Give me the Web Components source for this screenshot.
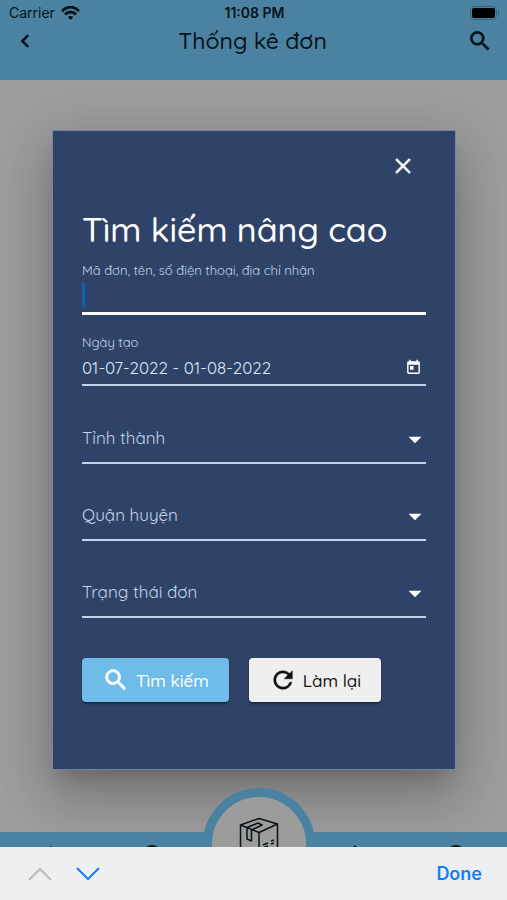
<!DOCTYPE html>
<html lang="vi">
<head>
<meta charset="utf-8">
<meta name="viewport" content="width=device-width, initial-scale=1">
<title>Thống kê đơn</title>
<style>
  body {
    margin: 0;
    min-height: 100vh;
    display: flex;
    flex-direction: column;
    background-color: #9e9e9e;
    font-family: Quicksand, Inter, "Noto Sans", sans-serif;
    color: #07131a;
    --bar: #4b82a1;
    --panel: #2f4368;
    --soft: #c3d3ea;
    --ios: Inter, "Liberation Sans", sans-serif;
  }

  main {
    flex: 1;
    padding: 50px 51px 60px 52px;
  }
</style>
</head>
<body>
<app-header>
  <status-bar slot="status"></status-bar>
  Thống kê đơn
</app-header>
<main>
  <search-dialog>
    <span slot="title">Tìm kiếm nâng cao</span>
    <text-field label="Mã đơn, tên, số điện thoại, địa chỉ nhận" active></text-field>
    <text-field label="Ngày tạo" value="01-07-2022 - 01-08-2022" icon="today"></text-field>
    <select-field label="Tỉnh thành"></select-field>
    <select-field label="Quận huyện"></select-field>
    <select-field label="Trạng thái đơn"></select-field>
    <icon-button slot="actions" icon="search" kind="primary">Tìm kiếm</icon-button>
    <icon-button slot="actions" icon="refresh">Làm lại</icon-button>
  </search-dialog>
</main>
<bottom-nav></bottom-nav>
<keyboard-bar>Done</keyboard-bar>

<script>
"use strict";

const icons = {
  back: `<path d="M15.5 5.5 9 12l6.5 6.5" fill="none" stroke="currentColor" stroke-width="2.8"/>`,
  search: `<path d="M15.5 14h-.79l-.28-.27A6.47 6.47 0 0 0 16 9.5 6.5 6.5 0 1 0 9.5 16c1.61 0 3.09-.59 4.23-1.57l.27.28v.79l5 4.99L20.49 19l-4.99-5zm-6 0C7.01 14 5 11.99 5 9.5S7.01 5 9.5 5 14 7.01 14 9.5 11.99 14 9.5 14z" stroke="currentColor" stroke-width=".5"/>`,
  close: `<path d="M19 6.41 17.59 5 12 10.59 6.41 5 5 6.41 10.59 12 5 17.59 6.41 19 12 13.41 17.59 19 19 17.59 13.41 12z" stroke="currentColor" stroke-width=".4"/>`,
  today: `<path d="M19 3h-1V1h-2v2H8V1H6v2H5c-1.11 0-1.99.9-1.99 2L3 19c0 1.1.89 2 2 2h14c1.1 0 2-.9 2-2V5c0-1.1-.9-2-2-2zm0 16H5V8h14v11zM7 10h5v5H7z"/>`,
  drop: `<path d="m6 9 6 6 6-6z"/>`,
  refresh: `<path d="M17.65 6.35A7.958 7.958 0 0 0 12 4a8 8 0 1 0 7.73 10h-2.08A5.99 5.99 0 0 1 12 18c-3.31 0-6-2.69-6-6s2.69-6 6-6c1.66 0 3.14.69 4.22 1.78L13 11h7V4l-2.35 2.35z" stroke="currentColor" stroke-width=".4"/>`,
  home: `<path d="M12 3 2 12h3v8h5v-6h4v6h5v-8h3z"/>`,
  circle: `<circle cx="12" cy="12" r="10"/>`,
  bell: `<path d="M12 22a2 2 0 0 0 2-2h-4c0 1.1.9 2 2 2zm6-6v-5c0-3-1.6-5.6-4.5-6.3V4a1.5 1.5 0 0 0-3 0v.7C7.6 5.4 6 7.9 6 11v5l-2 2v1h16v-1z"/>`,
};

function svg(name, size) {
  return `<svg width="${size}" height="${size}" viewBox="0 0 24 24" fill="currentColor" aria-hidden="true">${icons[name]}</svg>`;
}

class StatusBar extends HTMLElement {
  connectedCallback() {
    const shadow = this.attachShadow({ mode: "open" });
    shadow.innerHTML = `
<style>
  :host {
    display: grid;
    grid-template-columns: 1fr auto 1fr;
    align-items: center;
    height: 26px;
    padding: 0 7px 0 9px;
    font: 400 14px/20px var(--ios);
  }
  .network {
    display: flex;
    align-items: center;
    gap: 6px;
  }
  time {
    font-weight: 600;
  }
  .battery {
    justify-self: end;
  }
  svg {
    display: block;
  }
</style>
<div class="network">
  <span>Carrier</span>
  <svg width="19" height="14" viewBox="0 0 19 14" fill="none" stroke="currentColor" stroke-width="2.9">
    <path d="M1 5.2C6-.2 13-.2 18 5.2M4 8.5c3.2-3.4 7.8-3.4 11 0"/>
    <path d="M6.7 11 9.5 14l2.800-3c-1.6-1.5-4-1.5-5.6 0z" fill="currentColor" stroke="none"/>
  </svg>
</div>
<time>11:08 PM</time>
<svg class="battery" width="30" height="14" viewBox="0 0 30 14">
  <rect x=".5" y=".5" width="26" height="13" rx="4" fill="none" stroke="#32637f"/>
  <rect x="2" y="2" width="23" height="10" rx="2"/>
  <path d="M28 4.500c2 .8 2 4.2 0 5z" fill="#32637f"/>
</svg>`;
  }
}

class AppHeader extends HTMLElement {
  connectedCallback() {
    const shadow = this.attachShadow({ mode: "open" });
    shadow.innerHTML = `
<style>
  :host {
    display: block;
    box-sizing: border-box;
    padding-bottom: 24px;
    background-color: var(--bar);
  }
  .row {
    display: grid;
    grid-template-columns: 26px 1fr 26px;
    align-items: center;
    padding: 0 14px 0 12px;
  }
  h1 {
    margin: 0;
    font-weight: 500;
    font-size: 23px;
    line-height: 30px;
    text-align: center;
  }
  button {
    display: flex;
    justify-content: center;
    padding: 0;
    border: none;
    background: transparent;
    color: inherit;
  }
</style>
<slot name="status"></slot>
<div class="row">
  <button aria-label="Quay lại">${svg("back", 22)}</button>
  <h1><slot></slot></h1>
  <button aria-label="Tìm kiếm">${svg("search", 30)}</button>
</div>`;
  }
}

class SearchDialog extends HTMLElement {
  connectedCallback() {
    const shadow = this.attachShadow({ mode: "open" });
    shadow.innerHTML = `
<style>
  :host {
    display: block;
    box-sizing: border-box;
    padding: 20px 29px 67px;
    border: 1px solid #7287a3;
    background-color: var(--panel);
    color: #fff;
    box-shadow: 0 14px 19px -9px rgba(0, 0, 0, .2), 0 30px 48px 4px rgba(0, 0, 0, .14), 0 11px 58px 10px rgba(0, 0, 0, .12);
  }
  .close {
    display: block;
    margin: 0 8px 0 auto;
    padding: 2px;
    border: none;
    background: transparent;
    color: inherit;
    line-height: 0;
  }
  h2 {
    margin: 25px 0 8px;
    font-weight: 500;
    font-size: 34px;
    line-height: 48px;
    white-space: nowrap;
  }
  .actions {
    display: flex;
    gap: 20px;
    margin-top: 22px;
  }
</style>
<button class="close" aria-label="Đóng">${svg("close", 26)}</button>
<h2><slot name="title"></slot></h2>
<slot></slot>
<div class="actions"><slot name="actions"></slot></div>`;
  }
}

class TextField extends HTMLElement {
  connectedCallback() {
    const icon = this.getAttribute("icon");
    const shadow = this.attachShadow({ mode: "open" });
    shadow.innerHTML = `
<style>
  :host {
    display: block;
    padding-bottom: 19px;
  }
  label {
    display: block;
    font-size: 13px;
    line-height: 16px;
    color: var(--soft);
  }
  .control {
    display: flex;
    align-items: center;
    height: 34px;
    border-bottom: 2px solid var(--soft);
  }
  :host([active]) .control {
    border-bottom: 3px solid #fff;
  }
  .caret {
    width: 3px;
    height: 24px;
    background-color: #0b62ad;
  }
  input {
    flex: 1;
    min-width: 0;
    padding: 0;
    border: none;
    outline: none;
    background: transparent;
    color: #dce8f8;
    font: inherit;
    font-size: 17px;
  }
  svg {
    margin-right: 4px;
  }
</style>
<label for="field">${this.getAttribute("label")}</label>
<div class="control">
  ${this.hasAttribute("active") ? `<span class="caret"></span>` : ""}
  <input id="field" type="text" value="${this.getAttribute("value") || ""}">
  ${icon ? svg(icon, 17) : ""}
</div>`;
  }
}

class SelectField extends HTMLElement {
  connectedCallback() {
    const shadow = this.attachShadow({ mode: "open" });
    shadow.innerHTML = `
<style>
  :host {
    display: grid;
    grid-template-columns: 1fr 24px;
    align-items: center;
    margin-top: 11px;
    padding-bottom: 18px;
  }
  /* the empty select shares its cell with the resting label */
  label, select {
    grid-row: 1;
  }
  label {
    grid-column: 1;
    font-size: 17px;
    line-height: 24px;
    padding-bottom: 4px;
    color: var(--soft);
    pointer-events: none;
  }
  select {
    grid-column: 1 / -1;
    width: 100%;
    height: 48px;
    appearance: none;
    border: none;
    border-bottom: 2px solid var(--soft);
    border-radius: 0;
    background: transparent;
    color: inherit;
    font: inherit;
  }
  svg {
    grid-area: 1 / 2;
    pointer-events: none;
  }
</style>
<select id="field"><option></option></select>
<label for="field">${this.getAttribute("label")}</label>
${svg("drop", 26)}`;
  }
}

class IconButton extends HTMLElement {
  connectedCallback() {
    const shadow = this.attachShadow({ mode: "open" });
    shadow.innerHTML = `
<style>
  :host {
    display: block;
  }
  button {
    display: flex;
    align-items: center;
    gap: 6px;
    height: 44px;
    padding: 0 20px;
    border: none;
    border-radius: 4px;
    background-color: #efefef;
    color: #111;
    font: inherit;
    font-weight: 500;
    font-size: 17px;
    white-space: nowrap;
    box-shadow: 0 3px 2px -2px rgba(0, 0, 0, .3), 0 2px 3px rgba(0, 0, 0, .3);
  }
  :host([kind="primary"]) button {
    background-color: #6fbce8;
    color: #fff;
  }
</style>
<button>${svg(this.getAttribute("icon"), 28)}<slot></slot></button>`;
  }
}

class BottomNav extends HTMLElement {
  connectedCallback() {
    const shadow = this.attachShadow({ mode: "open" });
    shadow.innerHTML = `
<style>
  :host {
    position: relative;
    display: grid;
    grid-template-columns: repeat(5, 1fr);
    justify-items: center;
    height: 68px;
    background-color: var(--bar);
  }
  a {
    padding-top: 11px;
    color: #07131a;
  }
  .orders {
    position: absolute;
    left: 51%;
    bottom: 0;
    transform: translateX(-50%);
    box-sizing: border-box;
    width: 112px;
    height: 112px;
    padding-top: 20px;
    border: 9px solid var(--bar);
    border-radius: 50%;
    background-color: #9c9c9b;
    text-align: center;
  }
  .orders + a {
    grid-column: 4;
  }
</style>
<a href="#home" aria-label="Trang chủ">${svg("home", 24)}</a>
<a href="#stats" aria-label="Thống kê">${svg("circle", 24)}</a>
<a class="orders" href="#orders" aria-label="Đơn hàng">
  <svg width="40" height="50" viewBox="0 0 40 50" fill="none" stroke="currentColor" stroke-width="1.5" stroke-linejoin="round">
    <path d="M1.5 8 20 1.5 38.5 7v32L20 46 1.5 40zM1.5 8 20 15.5 38.5 7M20 15.5V46"/>
    <path d="M8 10.5 19 6l4 2-10.500 5M8 10.5V22l4.500 2V13"/>
    <path d="m24 28 5-2M32 24l3-1M25 30.5l4-1.500M32 27l3-1"/>
  </svg>
</a>
<a href="#alerts" aria-label="Thông báo">${svg("bell", 24)}</a>
<a href="#account" aria-label="Tài khoản">${svg("circle", 24)}</a>`;
  }
}

class KeyboardBar extends HTMLElement {
  connectedCallback() {
    const shadow = this.attachShadow({ mode: "open" });
    shadow.innerHTML = `
<style>
  :host {
    position: fixed;
    inset: auto 0 0;
    display: flex;
    align-items: center;
    gap: 24px;
    box-sizing: border-box;
    height: 53px;
    padding: 0 25px 0 28px;
    background-color: #eeeff1;
    font-family: var(--ios);
  }
  button {
    padding: 0;
    border: none;
    background: transparent;
    color: #157efb;
    font: inherit;
    font-weight: 600;
    font-size: 18px;
    line-height: 24px;
  }
  button:disabled {
    color: #bbbcbe;
  }
  .done {
    margin-left: auto;
  }
  svg {
    display: block;
    fill: none;
    stroke: currentColor;
    stroke-width: 2;
  }
</style>
<button disabled aria-label="Trước"><svg width="24" height="14" viewBox="0 0 24 14"><path d="M1 13 12 2l11 11"/></svg></button>
<button aria-label="Sau"><svg width="24" height="14" viewBox="0 0 24 14"><path d="m1 1 11 11L23 1"/></svg></button>
<button class="done"><slot></slot></button>`;
  }
}

customElements.define("status-bar", StatusBar);
customElements.define("app-header", AppHeader);
customElements.define("search-dialog", SearchDialog);
customElements.define("text-field", TextField);
customElements.define("select-field", SelectField);
customElements.define("icon-button", IconButton);
customElements.define("bottom-nav", BottomNav);
customElements.define("keyboard-bar", KeyboardBar);
</script>
</body>
</html>
